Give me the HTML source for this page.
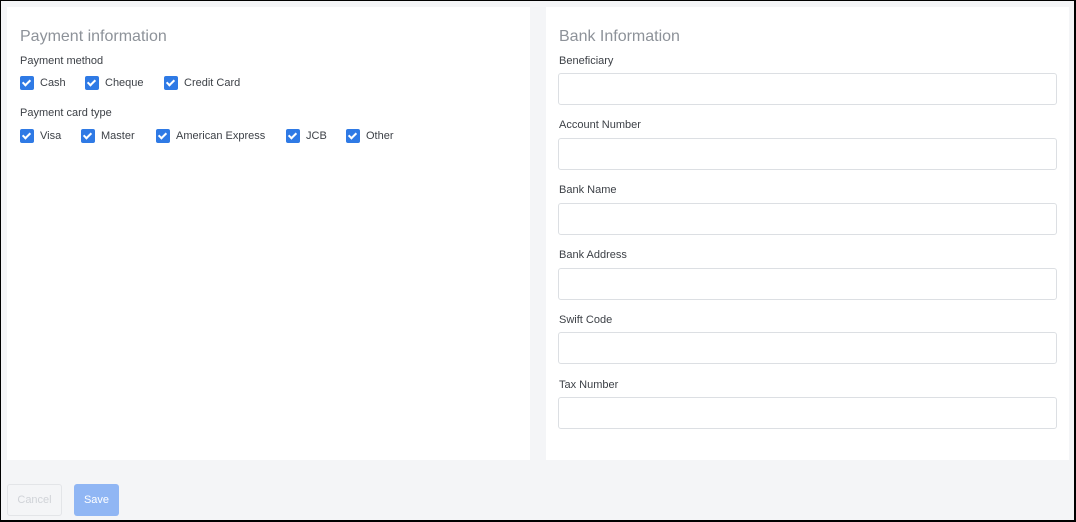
<!DOCTYPE html>
<html><head><style>
*{box-sizing:border-box;margin:0;padding:0}
body{width:1076px;height:522px;overflow:hidden;font-family:"Liberation Sans",sans-serif;background:#f4f5f7;position:relative;border:1px solid #000;border-width:1px 2px 2px 1px}
.panel{position:absolute;top:6px;height:453px;background:#fff}
h2{position:absolute;font-weight:normal;font-size:16px;color:#8d9299;top:21px}
.lbl{position:absolute;font-size:11px;color:#3d4147}
.cb{position:absolute;font-size:11px;color:#3d4147;display:flex;align-items:center;height:14px}
.cb i{display:inline-block;width:14px;height:14px;background:#2f7ae5;border-radius:2px;margin-right:6px;position:relative}
.cb i:after{content:"";position:absolute;left:4px;top:2px;width:3px;height:6px;border:solid #fff;border-width:0 2px 2px 0;transform:rotate(45deg)}
.inp{position:absolute;left:12px;width:499px;height:32px;border:1px solid #dcdfe3;border-radius:3px;background:#fff}
.btn{position:absolute;top:483px;height:32px;border-radius:3px;font-size:11px;display:flex;align-items:center;justify-content:center}
</style></head><body>
<div class="panel" style="left:6px;width:523px">
<h2 style="left:13px">Payment information</h2>
<div class="lbl" style="left:13px;top:48px">Payment method</div>
<div class="cb" style="left:13px;top:69px"><i></i>Cash</div>
<div class="cb" style="left:78px;top:69px"><i></i>Cheque</div>
<div class="cb" style="left:157px;top:69px"><i></i>Credit Card</div>
<div class="lbl" style="left:13px;top:100px">Payment card type</div>
<div class="cb" style="left:13px;top:122px"><i></i>Visa</div>
<div class="cb" style="left:74px;top:122px"><i></i>Master</div>
<div class="cb" style="left:149px;top:122px"><i></i>American Express</div>
<div class="cb" style="left:279px;top:122px"><i></i>JCB</div>
<div class="cb" style="left:339px;top:122px"><i></i>Other</div>
</div>
<div class="panel" style="left:545px;width:523px">
<h2 style="left:13px">Bank Information</h2>
<div class="lbl" style="left:13px;top:48px">Beneficiary</div><div class="inp" style="top:66px"></div>
<div class="lbl" style="left:13px;top:112px">Account Number</div><div class="inp" style="top:131px"></div>
<div class="lbl" style="left:13px;top:177px">Bank Name</div><div class="inp" style="top:196px"></div>
<div class="lbl" style="left:13px;top:242px">Bank Address</div><div class="inp" style="top:261px"></div>
<div class="lbl" style="left:13px;top:307px">Swift Code</div><div class="inp" style="top:325px"></div>
<div class="lbl" style="left:13px;top:372px">Tax Number</div><div class="inp" style="top:390px"></div>
</div>
<div class="btn" style="left:6px;width:55px;border:1px solid #e3e5e8;color:#d0d3d8">Cancel</div>
<div class="btn" style="left:73px;width:45px;background:#90b6f4;color:#fff">Save</div>
</body></html>
